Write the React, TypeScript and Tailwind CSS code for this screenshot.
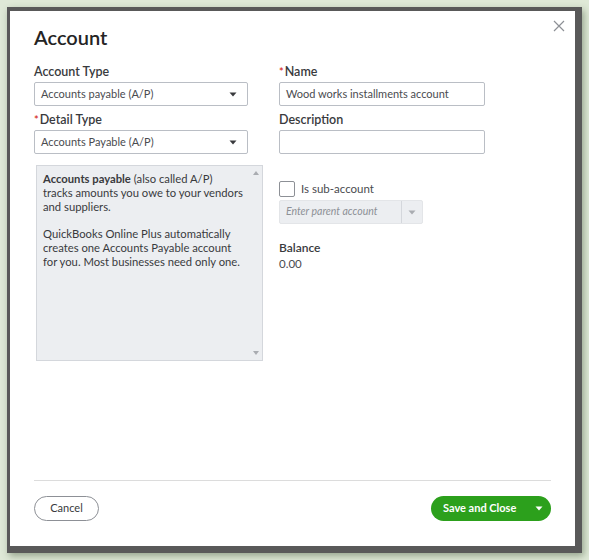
import React from "react";

const FONT = { fontFamily: "Lato, 'Open Sans', 'Noto Sans', sans-serif" };

function Caret({ color = "#393a3d" }: { color?: string }) {
  return (
    <svg width="8" height="5" viewBox="0 0 8 5" className="shrink-0">
      <path d="M0.5 0.5 H7.5 L4 4.5 Z" fill={color} />
    </svg>
  );
}

function Label({ text, required = false }: { text: string; required?: boolean }) {
  return (
    <div className="h-[16px] leading-[16px] text-[12.5px] font-semibold text-[#393a3d] mb-[2px]">
      {required && <span className="text-[#d52b1e] text-[11px] mr-[1px] align-top">*</span>}
      {text}
    </div>
  );
}

function SelectBox({ value }: { value: string }) {
  return (
    <div className="h-[24px] w-[214px] border border-[#babec5] rounded-[2px] bg-white flex items-center justify-between pl-[6px] pr-[10px]">
      <span className="text-[11px] text-[#4a4b4f]">{value}</span>
      <Caret />
    </div>
  );
}

export default function App() {
  return (
    <div className="w-[589px] h-[560px] bg-[#dfe9d7] pt-[7px] pl-[7px]" style={FONT}>
      <div className="w-[575px] h-[546px] bg-[#595959] pt-[4px] pl-[3px] shadow-[2px_3px_7px_rgba(60,80,50,0.45)]">
        <div className="relative w-[565px] h-[535px] bg-white flex flex-col px-[24px]">
          {/* close */}
          <button className="absolute right-[10px] top-[9px] w-[12px] h-[12px]">
            <svg width="12" height="12" viewBox="0 0 12 12">
              <path d="M1 1 L11 11 M11 1 L1 11" stroke="#8d9096" strokeWidth="1.2" />
            </svg>
          </button>

          <h1 className="pt-[14px] h-[38px] leading-[24px] text-[20px] font-semibold text-[#242424]">Account</h1>

          <div className="mt-[15px] flex gap-[16px]">
            {/* left column */}
            <div className="w-[229px] flex flex-col">
              <Label text="Account Type" />
              <SelectBox value="Accounts payable (A/P)" />
              <div className="mt-[6px]">
                <Label text="Detail Type" required />
              </div>
              <SelectBox value="Accounts Payable (A/P)" />
              <div className="mt-[11px] ml-[2px] w-[227px] h-[196px] bg-[#eceef1] border border-[#d4d7dc] flex">
                <div className="flex-1 pt-[6px] pl-[6px] text-[11.25px] leading-[14px] text-[#393a3d] whitespace-nowrap">
                  <p>
                    <b className="font-bold">Accounts payable</b> (also called A/P)
                    <br />
                    tracks amounts you owe to your vendors
                    <br />
                    and suppliers.
                  </p>
                  <p className="mt-[13px]">
                    QuickBooks Online Plus automatically
                    <br />
                    creates one Accounts Payable account
                    <br />
                    for you. Most businesses need only one.
                  </p>
                </div>
                <div className="w-[12px] flex flex-col justify-between items-center py-[5px]">
                  <svg width="6" height="4" viewBox="0 0 6 4">
                    <path d="M0 4 H6 L3 0 Z" fill="#a9acb1" />
                  </svg>
                  <svg width="6" height="4" viewBox="0 0 6 4">
                    <path d="M0 0 H6 L3 4 Z" fill="#a9acb1" />
                  </svg>
                </div>
              </div>
            </div>

            {/* right column */}
            <div className="w-[206px] flex flex-col">
              <Label text="Name" required />
              <div className="h-[24px] border border-[#babec5] rounded-[2px] flex items-center pl-[6px] text-[11px] text-[#4a4b4f]">
                Wood works installments account
              </div>
              <div className="mt-[6px]">
                <Label text="Description" />
              </div>
              <div className="h-[24px] border border-[#babec5] rounded-[2px]" />

              <div className="mt-[27px] flex items-center gap-[6px] h-[16px]">
                <div className="w-[16px] h-[16px] border border-[#8d9096] rounded-[2px] bg-white" />
                <span className="text-[11.5px] text-[#4a4b4f]">Is sub-account</span>
              </div>
              <div className="mt-[3px] w-[144px] h-[24px] bg-[#eceef1] border border-[#e3e5e8] rounded-[2px] flex items-center">
                <span className="flex-1 pl-[6px] text-[10.5px] italic text-[#8d9096]">Enter parent account</span>
                <div className="w-[21px] h-full border-l border-[#d4d7dc] flex items-center justify-center">
                  <Caret color="#a9acb1" />
                </div>
              </div>

              <div className="mt-[16px] h-[16px] leading-[16px] text-[12px] font-semibold text-[#393a3d]">Balance</div>
              <div className="h-[16px] leading-[16px] text-[11.5px] text-[#4a4b4f]">0.00</div>
            </div>
          </div>

          {/* footer */}
          <div className="mt-auto border-t border-[#dcdcdc] pt-[15px] pb-[25px] flex justify-between">
            <button className="w-[65px] h-[25px] rounded-full border border-[#8d9096] text-[11px] text-[#393a3d] bg-white">
              Cancel
            </button>
            <button className="w-[120px] h-[25px] rounded-full bg-[#2ca01c] text-white text-[11px] font-bold flex items-center pl-[12px] pr-[8px] justify-between">
              <span>Save and Close</span>
              <Caret color="#ffffff" />
            </button>
          </div>
        </div>
      </div>
    </div>
  );
}
